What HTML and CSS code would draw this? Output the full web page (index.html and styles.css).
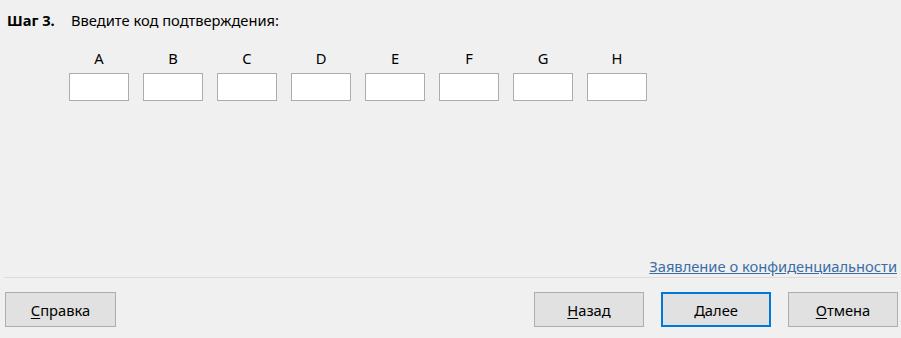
FILE: index.html
```html
<!DOCTYPE html>
<html lang="ru">
<head>
    <meta charset="UTF-8">
    <title>Шаг 3</title>
    <link rel="stylesheet" href="styles.css">
</head>
<body>
    <div class="wizard">
        <div class="step">
            <span class="step-num">Шаг 3.</span>
            <span class="step-text">Введите код подтверждения:</span>
        </div>

        <div class="codes">
            <div class="code"><label>A</label><input type="text"></div>
            <div class="code"><label>B</label><input type="text"></div>
            <div class="code"><label>C</label><input type="text"></div>
            <div class="code"><label>D</label><input type="text"></div>
            <div class="code"><label>E</label><input type="text"></div>
            <div class="code"><label>F</label><input type="text"></div>
            <div class="code"><label>G</label><input type="text"></div>
            <div class="code"><label>H</label><input type="text"></div>
        </div>

        <div class="privacy">
            <a href="#">Заявление о конфиденциальности</a>
        </div>
        <div class="divider"></div>

        <div class="buttons">
            <button class="btn"><u>С</u>правка</button>
            <div class="spacer"></div>
            <button class="btn"><u>Н</u>азад</button>
            <button class="btn btn-default"><u>Д</u>алее</button>
            <button class="btn"><u>О</u>тмена</button>
        </div>
    </div>
</body>
</html>
```

FILE: styles.css
```css
body {
    margin: 0;
    background: #f0f0f0;
    font-family: "Noto Sans", "Open Sans", sans-serif;
    font-size: 14.7px;
    color: #000;
}

.wizard {
    height: 338px;
    display: flex;
    flex-direction: column;
    box-sizing: border-box;
}

.step {
    padding: 10px 0 0 7px;
    line-height: 20px;
    display: flex;
}

.step-num {
    font-weight: bold;
    width: 64px;
}

.codes {
    display: flex;
    gap: 14px;
    padding: 18px 0 0 69px;
}

.code {
    display: flex;
    flex-direction: column;
    align-items: center;
}

.code label {
    line-height: 20px;
    margin-bottom: 5px;
}

.code input {
    width: 60px;
    height: 28px;
    box-sizing: border-box;
    border: 1px solid #adadad;
    background: #fff;
    margin: 0;
    padding: 0 4px;
    outline: none;
}

.privacy {
    margin-top: auto;
    display: flex;
    justify-content: flex-end;
    padding-right: 4px;
    line-height: 20px;
}

.privacy a {
    color: #3a6ea5;
    text-decoration: underline;
}

.divider {
    height: 1px;
    background: #dcdcdc;
    margin: 1px 4px 14px 4px;
}

.buttons {
    display: flex;
    gap: 17px;
    padding: 0 3px 11px 5px;
}

.spacer {
    flex: 1;
}

.btn {
    width: 110px;
    height: 35px;
    box-sizing: border-box;
    background: #e1e1e1;
    border: 1px solid #adadad;
    font-family: inherit;
    font-size: 14.7px;
    color: #000;
    padding: 0;
}

.btn:first-child {
    width: 111px;
}

.btn u {
    text-underline-offset: 2px;
}

.btn-default {
    border: 2px solid #0078d7;
}
```
